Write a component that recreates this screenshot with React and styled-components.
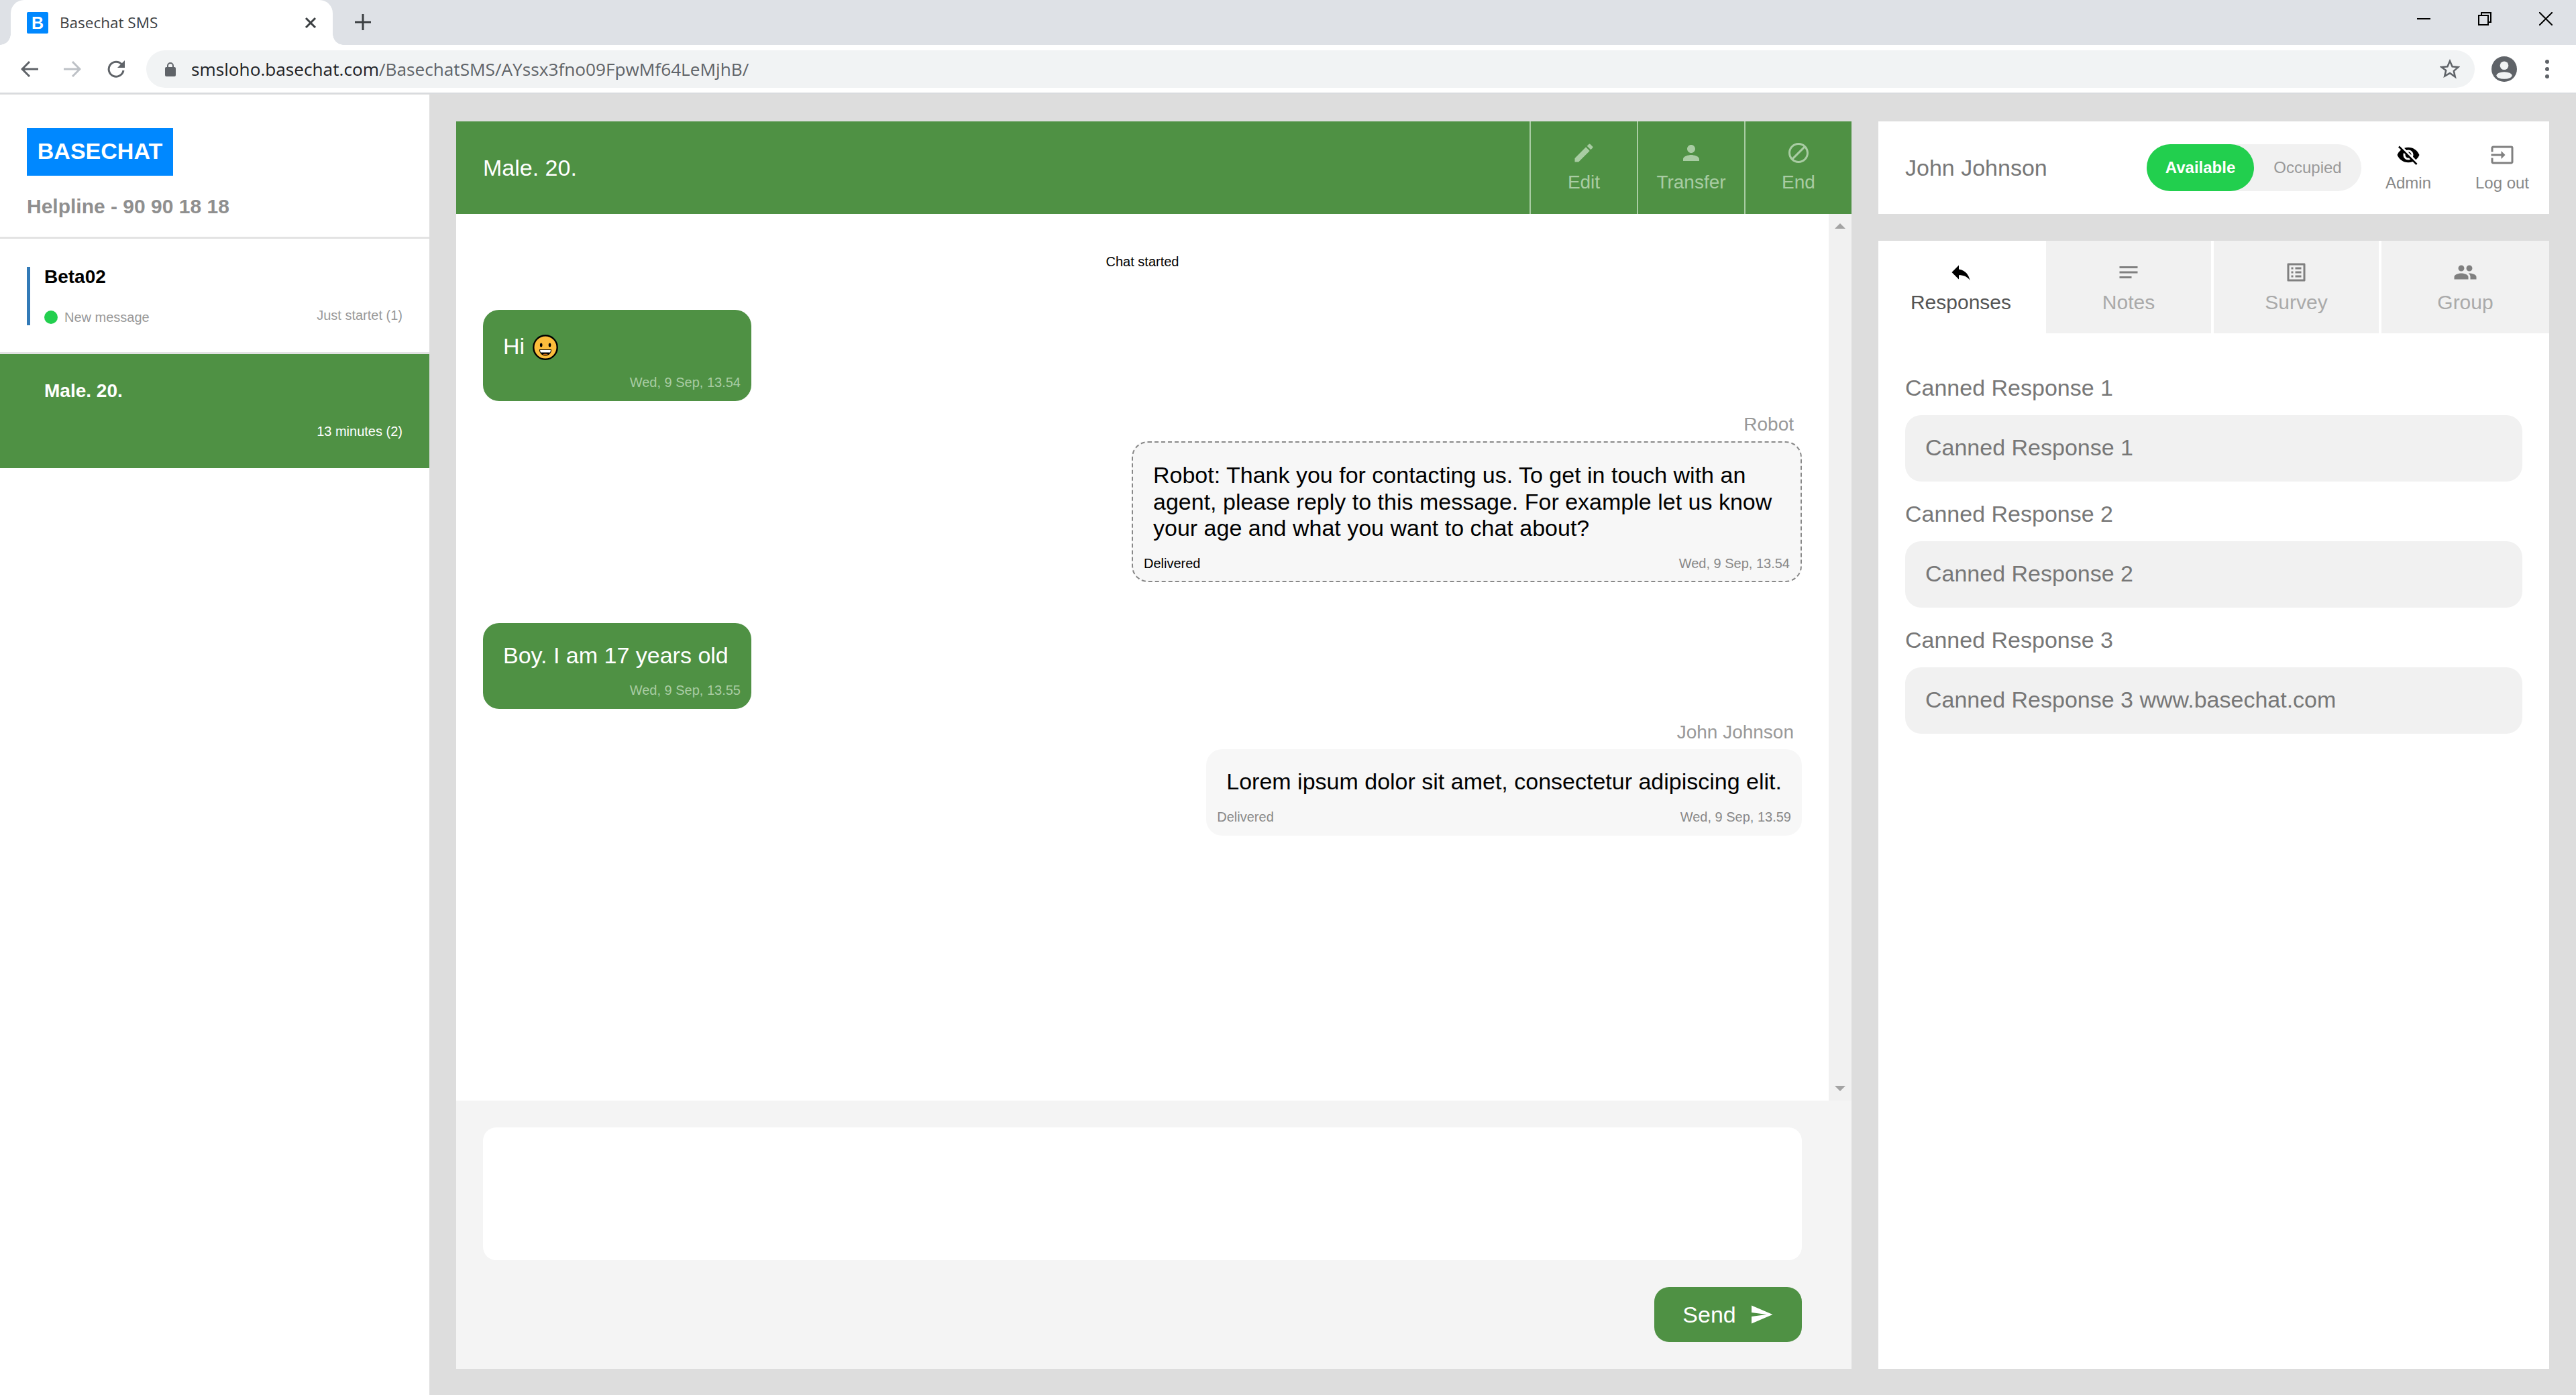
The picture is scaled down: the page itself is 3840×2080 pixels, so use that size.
import React from "react";
import styled, { createGlobalStyle } from "styled-components";
import {
  MdEdit,
  MdPerson,
  MdBlock,
  MdReply,
  MdNotes,
  MdListAlt,
  MdPeople,
  MdVisibilityOff,
  MdInput,
  MdSend,
} from "react-icons/md";

const GREEN = "#4f9144";

const GlobalStyle = createGlobalStyle`
  html, body { margin: 0; padding: 0; background: #ddd; }
  * { box-sizing: border-box; }
  body { font-family: "Liberation Sans", Arial, sans-serif; }
`;

const Page = styled.div`
  width: 3840px;
  height: 2080px;
  display: flex;
  flex-direction: column;
  overflow: hidden;
`;

/* browser chrome */
const TabStrip = styled.div`
  height: 67px;
  background: #dee1e6;
  display: flex;
  align-items: stretch;
  padding-left: 16px;
`;

const BrowserTab = styled.div`
  width: 480px;
  background: #fff;
  border-radius: 20px 20px 0 0;
  display: flex;
  align-items: center;
  padding: 0 24px;
  position: relative;
  &::before,
  &::after {
    content: "";
    position: absolute;
    bottom: 0;
    width: 16px;
    height: 16px;
    background: radial-gradient(circle at 0 0, #dee1e6 15.5px, #fff 16px);
  }
  &::before {
    left: -16px;
  }
  &::after {
    right: -16px;
    background: radial-gradient(circle at 100% 0, #dee1e6 15.5px, #fff 16px);
  }
`;

const Favicon = styled.span`
  width: 32px;
  height: 32px;
  border-radius: 2px;
  background: #0088ff;
  color: #fff;
  font: bold 25px/32px "Liberation Sans", sans-serif;
  text-align: center;
  flex: none;
`;

const TabTitle = styled.span`
  font: 22.5px "Open Sans", sans-serif;
  color: #3c4043;
  margin-left: 17px;
  flex: 1;
`;

const NewTab = styled.div`
  margin: 20px 0 0 32px;
  height: 26px;
`;

const WindowControls = styled.div`
  margin-left: auto;
  margin-right: 35px;
  display: flex;
  gap: 71px;
  padding-top: 18px;
`;

const Toolbar = styled.div`
  height: 73px;
  background: #fff;
  border-bottom: 2px solid #d9dbde;
  display: flex;
  align-items: center;
  padding: 0 40px 0 31px;
  gap: 38px;
`;

const AddressBar = styled.div`
  flex: 1;
  height: 56px;
  margin: 0 -13px 0 -7px;
  border-radius: 28px;
  background: #f1f3f4;
  display: flex;
  align-items: center;
  padding: 0 22px 0 28px;
  font: 26.2px "Open Sans", sans-serif;
  color: #202124;
  span {
    color: #5f6368;
  }
`;

const UrlText = styled.div`
  flex: 1;
  margin-left: 23px;
`;

const Kebab = styled.div`
  display: flex;
  flex-direction: column;
  gap: 5px;
  margin-left: 4px;
  span {
    width: 6px;
    height: 6px;
    border-radius: 50%;
    background: #5f6368;
  }
`;

/* app */
const Workspace = styled.div`
  flex: 1;
  display: flex;
  background: #ddd;
  min-height: 0;
`;

const Sidebar = styled.aside`
  width: 640px;
  background: #fff;
  margin-top: 1px;
`;

const Brand = styled.div`
  height: 215px;
  padding: 50px 40px 0;
  border-bottom: 3px solid #e3e3e3;
`;

const Logo = styled.div`
  width: 218px;
  height: 71px;
  background: #0088ff;
  color: #fff;
  font-size: 34px;
  font-weight: bold;
  line-height: 69px;
  text-align: center;
`;

const Helpline = styled.div`
  margin-top: 29px;
  font-size: 30px;
  line-height: 34px;
  font-weight: bold;
  color: #8f8f8f;
`;

const ChatRow = styled.div`
  height: ${(p) => (p.$active ? "170px" : "172px")};
  padding: ${(p) => (p.$active ? "40px 40px 0" : "42px 40px 0")};
  background: ${(p) => (p.$active ? GREEN : "#fff")};
  border-bottom: ${(p) => (p.$active ? "0" : "3px solid #e3e3e3")};
`;

const ChatInner = styled.div`
  height: 87px;
  padding-left: ${(p) => (p.$active ? "26px" : "21px")};
  border-left: ${(p) => (p.$active ? "0" : "5px solid #337ab7")};
  display: flex;
  flex-direction: column;
  justify-content: space-between;
`;

const ChatName = styled.div`
  font-size: 28px;
  line-height: 30px;
  font-weight: bold;
  color: ${(p) => (p.$active ? "#fff" : "#000")};
`;

const ChatFoot = styled.div`
  display: flex;
  align-items: center;
  font-size: 20px;
  line-height: 24px;
  color: #999;
`;

const Dot = styled.span`
  width: 20px;
  height: 20px;
  border-radius: 50%;
  background: #22cf4e;
  margin-right: 10px;
`;

const ChatTime = styled.span`
  margin-left: auto;
  margin-top: ${(p) => (p.$active ? "0" : "-6px")};
  color: ${(p) => (p.$active ? "#fff" : "#999")};
`;

const Center = styled.main`
  width: 2080px;
  margin: 41px 40px 39px;
  display: flex;
  flex-direction: column;
`;

const ChatHeader = styled.header`
  height: 138px;
  background: ${GREEN};
  display: flex;
  align-items: center;
  padding-left: 40px;
  color: #fff;
  font-size: 34px;
`;

const HeaderActions = styled.div`
  margin-left: auto;
  display: flex;
  height: 100%;
`;

const HeaderAction = styled.div`
  width: 160px;
  border-left: 2px solid #a9cca3;
  display: flex;
  flex-direction: column;
  align-items: center;
  padding-top: 29px;
  gap: 9px;
  color: #a9cca3;
  font-size: 28px;
  line-height: 34px;
`;

const ScrollWrap = styled.div`
  flex: 1;
  min-height: 0;
  background: #fff;
  display: flex;
`;

const MessageList = styled.div`
  flex: 1;
  padding: 60px 40px 0;
  display: flex;
  flex-direction: column;
`;

const Scrollbar = styled.div`
  width: 34px;
  background: #f1f1f1;
  display: flex;
  flex-direction: column;
  justify-content: space-between;
  align-items: center;
  padding: 14px 0;
`;

const Arrow = styled.span`
  width: 0;
  height: 0;
  border-left: 8px solid transparent;
  border-right: 8px solid transparent;
  ${(p) => (p.$down ? "border-top: 8px solid #a3a3a3;" : "border-bottom: 8px solid #a3a3a3;")}
`;

const SystemNote = styled.div`
  text-align: center;
  font-size: 20px;
  line-height: 22px;
  color: #000;
  margin-bottom: 61px;
`;

const Sender = styled.div`
  align-self: flex-end;
  margin-right: 12px;
  font-size: 28px;
  line-height: 32px;
  color: #999;
  margin-top: 19px;
  margin-bottom: 9px;
`;

const Bubble = styled.div`
  align-self: ${(p) => (p.$incoming ? "flex-start" : "flex-end")};
  width: fit-content;
  min-width: ${(p) => (p.$incoming ? "400px" : "0")};
  max-width: 999px;
  margin-top: ${(p) => p.$top || 0}px;
  padding: 29px 16px 16px;
  border-radius: 24px;
  background: ${(p) => (p.$incoming ? GREEN : "#f7f7f7")};
  color: ${(p) => (p.$incoming ? "#fff" : "#000")};
  ${(p) => p.$dashed && "border: 2px dashed #888; padding: 29px 16px 14px;"}
`;

const MessageText = styled.div`
  font-size: 34px;
  line-height: ${(p) => (p.$tall ? "50px" : "39.6px")};
  padding: 0 14px;
  margin-bottom: ${(p) => (p.$tall ? "17px" : "20px")};
`;

const Meta = styled.div`
  display: flex;
  justify-content: space-between;
  font-size: 20px;
  line-height: 24px;
`;

const Status = styled.span`
  color: ${(p) => (p.$muted ? "#888" : "#000")};
`;

const Stamp = styled.span`
  margin-left: auto;
  color: ${(p) => (p.$incoming ? "#a9cca3" : "#888")};
`;

const Composer = styled.div`
  height: 400px;
  background: #f4f4f4;
  padding: 40px 74px 40px 40px;
  display: flex;
  flex-direction: column;
  align-items: flex-end;
  gap: 40px;
`;

const InputBox = styled.div`
  width: 100%;
  height: 198px;
  background: #fff;
  border-radius: 20px;
`;

const SendButton = styled.button`
  width: 220px;
  height: 82px;
  border: 0;
  border-radius: 22px;
  background: ${GREEN};
  color: #fff;
  font: 34px "Liberation Sans", sans-serif;
  display: flex;
  align-items: center;
  justify-content: center;
  gap: 20px;
  padding: 0;
`;

const RightColumn = styled.div`
  width: 1000px;
  margin: 41px 0 39px;
  display: flex;
  flex-direction: column;
  gap: 40px;
`;

const UserBar = styled.div`
  height: 138px;
  background: #fff;
  display: flex;
  align-items: center;
  padding-left: 40px;
`;

const UserName = styled.div`
  flex: 1;
  font-size: 34px;
  color: #777;
`;

const Toggle = styled.div`
  width: 320px;
  height: 70px;
  border-radius: 35px;
  background: #f1f1f1;
  display: flex;
`;

const ToggleOption = styled.div`
  width: 160px;
  border-radius: 35px;
  font-size: 24px;
  line-height: 70px;
  text-align: center;
  font-weight: ${(p) => (p.$on ? "bold" : "normal")};
  background: ${(p) => (p.$on ? "#22cf4e" : "transparent")};
  color: ${(p) => (p.$on ? "#fff" : "#999")};
`;

const UserAction = styled.div`
  width: 140px;
  height: 100%;
  padding-top: 32px;
  display: flex;
  flex-direction: column;
  align-items: center;
  gap: 10px;
  font-size: 24px;
  line-height: 28px;
  color: #888;
  svg {
    color: ${(p) => p.$icon};
  }
`;

const ToolPanel = styled.div`
  flex: 1;
  background: #fff;
`;

const TabRow = styled.div`
  display: grid;
  grid-template-columns: 250px 246px 250px 254px;
  height: 138px;
`;

const ToolTab = styled.div`
  background: ${(p) => (p.$active ? "#fff" : "#f1f1f1")};
  background-clip: padding-box;
  display: flex;
  flex-direction: column;
  align-items: center;
  padding: 29px ${(p) => (p.$active ? "4px" : "0")} 0 0;
  gap: 10px;
  font-size: 30px;
  line-height: 34px;
  color: ${(p) => (p.$active ? "#555" : "#aaa")};
  svg {
    color: ${(p) => (p.$active ? "#000" : "#808080")};
  }
  &:nth-child(n + 3) {
    border-left: 4px solid #fff;
  }
`;

const Responses = styled.div`
  padding: 61px 40px 0;
`;

const CannedLabel = styled.div`
  font-size: 34px;
  line-height: 40px;
  color: #777;
  margin-bottom: 21px;
`;

const CannedInput = styled.div`
  height: 99px;
  border-radius: 24px;
  background: #f1f1f1;
  padding-left: 30px;
  font-size: 34px;
  line-height: 97px;
  color: #777;
  margin-bottom: 28px;
`;

const EmojiSvg = styled.svg`
  width: 38px;
  height: 38px;
  vertical-align: -9px;
  margin-left: 12px;
`;

function GrinEmoji() {
  return (
    <EmojiSvg viewBox="0 0 38 38">
      <circle cx="19" cy="19" r="17.700" fill="#fdbd3c" stroke="#000" strokeWidth="2.400" />
      <ellipse cx="12.700" cy="15.500" rx="1.800" ry="3" fill="#000" />
      <ellipse cx="25.500" cy="15.500" rx="1.800" ry="3" fill="#000" />
      <path d="M10 22h18c.5 4-3 9.500-9 9.500S9.500 26 10 22z" fill="#000" />
      <path d="M11 23h16l-.8 3.500H11.800z" fill="#fff" />
      <path d="M15 29.500c2.500-1.300 5.500-1.300 8 0-2.500 1.300-5.500 1.300-8 0z" fill="#c86a10" />
    </EmojiSvg>
  );
}

const CANNED = [
  { label: "Canned Response 1", value: "Canned Response 1" },
  { label: "Canned Response 2", value: "Canned Response 2" },
  { label: "Canned Response 3", value: "Canned Response 3 www.basechat.com" },
];

export default function App() {
  return (
    <Page>
      <GlobalStyle />
      <TabStrip>
        <BrowserTab>
          <Favicon>B</Favicon>
          <TabTitle>Basechat SMS</TabTitle>
          <svg width="18" height="18" viewBox="0 0 18 18">
            <path d="M2 2l14 14M16 2L2 16" stroke="#3c4043" strokeWidth="3" />
          </svg>
        </BrowserTab>
        <NewTab>
          <svg width="26" height="26" viewBox="0 0 26 26">
            <path d="M13 1v24M1 13h24" stroke="#3c4043" strokeWidth="3" />
          </svg>
        </NewTab>
        <WindowControls>
          <svg width="20" height="20" viewBox="0 0 20 20">
            <path d="M0 10h20" stroke="#000" strokeWidth="2" />
          </svg>
          <svg width="20" height="20" viewBox="0 0 20 20" fill="none" stroke="#000" strokeWidth="2">
            <rect x="1" y="5" width="14" height="14" />
            <path d="M5 5V1h14v14h-4" />
          </svg>
          <svg width="20" height="20" viewBox="0 0 20 20">
            <path d="M0 0l20 20M20 0L0 20" stroke="#000" strokeWidth="2" />
          </svg>
        </WindowControls>
      </TabStrip>
      <Toolbar>
        <svg width="26" height="26" viewBox="0 0 26 26" fill="none" stroke="#5f6368" strokeWidth="3">
          <path d="M26 13H3M13 2L2 13l11 11" />
        </svg>
        <svg width="26" height="26" viewBox="0 0 26 26" fill="none" stroke="#bdc1c6" strokeWidth="3">
          <path d="M0 13h23M13 2l11 11-11 11" />
        </svg>
        <svg width="28" height="26" viewBox="0 0 28 26" fill="none">
          <path d="M22.500 6A11 11 0 1 0 25 15" stroke="#5f6368" strokeWidth="3" />
          <path d="M27 0v11H16z" fill="#5f6368" />
        </svg>
        <AddressBar>
          <svg width="16" height="22" viewBox="0 0 16 22">
            <path d="M3 8V6a5 5 0 0 1 10 0v2h1a2 2 0 0 1 2 2v10a2 2 0 0 1-2 2H2a2 2 0 0 1-2-2V10a2 2 0 0 1 2-2zm2 0h6V6a3 3 0 0 0-6 0z" fill="#5f6368" />
          </svg>
          <UrlText>
            smsloho.basechat.com<span>/BasechatSMS/AYssx3fno09FpwMf64LeMjhB/</span>
          </UrlText>
          <svg width="30" height="30" viewBox="0 0 30 30" fill="none" stroke="#5f6368" strokeWidth="2.500">
            <path d="M15 3l3.600 8.200 8.900.8-6.700 5.900 2 8.700L15 21.100 7.200 25.600l2-8.700L2.500 12l8.900-.8z" />
          </svg>
        </AddressBar>
        <svg width="38" height="38" viewBox="0 0 36 36">
          <circle cx="18" cy="18" r="18" fill="#5f6368" />
          <circle cx="18" cy="13" r="6" fill="#f1f3f4" />
          <ellipse cx="18" cy="27" rx="11" ry="5" fill="#f1f3f4" />
        </svg>
        <Kebab>
          <span />
          <span />
          <span />
        </Kebab>
      </Toolbar>

      <Workspace>
        <Sidebar>
          <Brand>
            <Logo>BASECHAT</Logo>
            <Helpline>Helpline - 90 90 18 18</Helpline>
          </Brand>
          <ChatRow>
            <ChatInner>
              <ChatName>Beta02</ChatName>
              <ChatFoot>
                <Dot />
                New message
                <ChatTime>Just startet (1)</ChatTime>
              </ChatFoot>
            </ChatInner>
          </ChatRow>
          <ChatRow $active>
            <ChatInner $active>
              <ChatName $active>Male. 20.</ChatName>
              <ChatFoot>
                <ChatTime $active>13 minutes (2)</ChatTime>
              </ChatFoot>
            </ChatInner>
          </ChatRow>
        </Sidebar>

        <Center>
          <ChatHeader>
            Male. 20.
            <HeaderActions>
              <HeaderAction>
                <MdEdit size={36} />
                Edit
              </HeaderAction>
              <HeaderAction>
                <MdPerson size={36} />
                Transfer
              </HeaderAction>
              <HeaderAction>
                <MdBlock size={36} />
                End
              </HeaderAction>
            </HeaderActions>
          </ChatHeader>
          <ScrollWrap>
            <MessageList>
              <SystemNote>Chat started</SystemNote>
              <Bubble $incoming>
                <MessageText $tall>
                  Hi
                  <GrinEmoji />
                </MessageText>
                <Meta>
                  <Stamp $incoming>Wed, 9 Sep, 13.54</Stamp>
                </Meta>
              </Bubble>
              <Sender>Robot</Sender>
              <Bubble $dashed>
                <MessageText>
                  Robot: Thank you for contacting us. To get in touch with an agent, please reply to this message. For example let us know your age and what you want to chat about?
                </MessageText>
                <Meta>
                  <Status>Delivered</Status>
                  <Stamp>Wed, 9 Sep, 13.54</Stamp>
                </Meta>
              </Bubble>
              <Bubble $incoming $top={61}>
                <MessageText>Boy. I am 17 years old</MessageText>
                <Meta>
                  <Stamp $incoming>Wed, 9 Sep, 13.55</Stamp>
                </Meta>
              </Bubble>
              <Sender>John Johnson</Sender>
              <Bubble>
                <MessageText>Lorem ipsum dolor sit amet, consectetur adipiscing elit.</MessageText>
                <Meta>
                  <Status $muted>Delivered</Status>
                  <Stamp>Wed, 9 Sep, 13.59</Stamp>
                </Meta>
              </Bubble>
            </MessageList>
            <Scrollbar>
              <Arrow />
              <Arrow $down />
            </Scrollbar>
          </ScrollWrap>
          <Composer>
            <InputBox />
            <SendButton>
              Send
              <MdSend size={36} />
            </SendButton>
          </Composer>
        </Center>

        <RightColumn>
          <UserBar>
            <UserName>John Johnson</UserName>
            <Toggle>
              <ToggleOption $on>Available</ToggleOption>
              <ToggleOption>Occupied</ToggleOption>
            </Toggle>
            <UserAction $icon="#000">
              <MdVisibilityOff size={36} />
              Admin
            </UserAction>
            <UserAction $icon="#808080">
              <MdInput size={36} />
              Log out
            </UserAction>
          </UserBar>
          <ToolPanel>
            <TabRow>
              <ToolTab $active>
                <MdReply size={36} />
                Responses
              </ToolTab>
              <ToolTab>
                <MdNotes size={36} />
                Notes
              </ToolTab>
              <ToolTab>
                <MdListAlt size={36} />
                Survey
              </ToolTab>
              <ToolTab>
                <MdPeople size={36} />
                Group
              </ToolTab>
            </TabRow>
            <Responses>
              {CANNED.map((r) => (
                <div key={r.label}>
                  <CannedLabel>{r.label}</CannedLabel>
                  <CannedInput>{r.value}</CannedInput>
                </div>
              ))}
            </Responses>
          </ToolPanel>
        </RightColumn>
      </Workspace>
    </Page>
  );
}
